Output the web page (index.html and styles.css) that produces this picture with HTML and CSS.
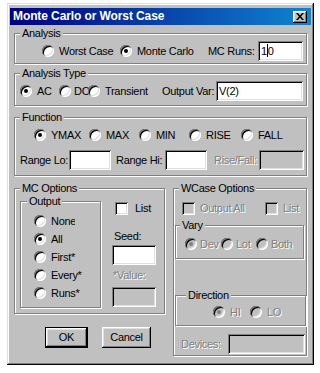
FILE: index.html
```html
<!DOCTYPE html>
<html lang="en">

<head>
  <meta charset="UTF-8" />
  <title>Monte Carlo or Worst Case</title>
  <link rel="stylesheet" href="styles.css">
</head>

<body>
  <div class="window">
    <div class="titlebar">
      <span class="title">Monte Carlo or Worst Case</span>
      <span class="close">
        <svg width="8" height="7" viewBox="0 0 8 7">
          <path d="M0 0h2l2 2.5L6 0h2L5 3.5 8 7H6L4 4.5 2 7H0l3-3.5z" fill="#000" />
        </svg>
      </span>
    </div>

    <div class="dialog">
      <fieldset class="group analysis">
        <legend>Analysis</legend>
        <div class="row">
          <label class="opt w-worst"><span class="radio"></span>Worst Case</label>
          <label class="opt w-monte"><span class="radio on"></span>Monte Carlo</label>
          <span class="lbl w-runs">MC Runs:</span>
          <span class="field w-runsbox">1<span class="caret"></span>0</span>
        </div>
      </fieldset>

      <fieldset class="group atype">
        <legend>Analysis Type</legend>
        <div class="row">
          <label class="opt w-ac"><span class="radio on"></span>AC</label>
          <label class="opt w-dc"><span class="radio"></span>DC</label>
          <label class="opt w-tran"><span class="radio"></span>Transient</label>
          <span class="lbl w-outvar">Output Var:</span>
          <span class="field w-outbox">V(2)</span>
        </div>
      </fieldset>

      <fieldset class="group function">
        <legend>Function</legend>
        <div class="row funcs">
          <label class="opt w-ymax"><span class="radio on"></span>YMAX</label>
          <label class="opt w-max"><span class="radio"></span>MAX</label>
          <label class="opt w-min"><span class="radio"></span>MIN</label>
          <label class="opt w-rise"><span class="radio"></span>RISE</label>
          <label class="opt"><span class="radio"></span>FALL</label>
        </div>
        <div class="row ranges">
          <span class="lbl w-range">Range Lo:</span>
          <span class="field w-rangebox"></span>
          <span class="lbl w-range gap-hi">Range Hi:</span>
          <span class="field w-rangebox"></span>
          <span class="lbl off w-rf">Rise/Fall:</span>
          <span class="field off w-rfbox"></span>
        </div>
      </fieldset>

      <div class="lower">
        <div class="leftcol">
          <fieldset class="group mc">
            <legend>MC Options</legend>
            <div class="mc-inner">
              <fieldset class="group output">
                <legend>Output</legend>
                <div class="outlist">
                  <label class="opt"><span class="radio"></span><span class="clip">None</span></label>
                  <label class="opt"><span class="radio on"></span>All</label>
                  <label class="opt"><span class="radio"></span>First*</label>
                  <label class="opt"><span class="radio"></span>Every*</label>
                  <label class="opt"><span class="radio"></span>Runs*</label>
                </div>
              </fieldset>
              <div class="mcside">
                <label class="chk"><span class="check"></span>List</label>
                <span class="seed-lbl">Seed:</span>
                <span class="field seed-box"></span>
                <span class="val-lbl off">*Value:</span>
                <span class="field off val-box"></span>
              </div>
            </div>
          </fieldset>
          <div class="buttons">
            <span class="btn default">OK</span>
            <span class="btn cancel">Cancel</span>
          </div>
        </div>

        <fieldset class="group wcase">
          <legend>WCase Options</legend>
          <div class="wchecks">
            <label class="chk w-outall off"><span class="check off"></span>Output All</label>
            <label class="chk off"><span class="check off"></span>List</label>
          </div>
          <fieldset class="group vary">
            <legend>Vary</legend>
            <div class="row">
              <label class="opt off w-dev"><span class="radio off on"></span>Dev</label>
              <label class="opt off w-lot"><span class="radio off"></span>Lot</label>
              <label class="opt off"><span class="radio off"></span>Both</label>
            </div>
          </fieldset>
          <fieldset class="group direction">
            <legend>Direction</legend>
            <div class="row">
              <label class="opt off w-hi"><span class="radio off on"></span>HI</label>
              <label class="opt off"><span class="radio off"></span>LO</label>
            </div>
          </fieldset>
          <div class="row devices">
            <span class="lbl off w-dev-lbl">Devices:</span>
            <span class="field off w-devbox"></span>
          </div>
        </fieldset>
      </div>
    </div>
  </div>
</body>

</html>
```

FILE: styles.css
```css
* {
  box-sizing: border-box;
}

body {
  margin: 0;
  background: #fff;
  font-family: "Liberation Sans", Arial, sans-serif;
  font-size: 11px;
  line-height: 13px;
  letter-spacing: -0.3px;
  color: #000;
}

/* window frame */
.window {
  width: 307px;
  height: 362px;
  margin: 3px 0 0 7px;
  padding: 5px 3px 3px;
  background: #c0c0c0;
  box-shadow: inset -1px -1px #000, inset 1px 1px #dfdfdf,
    inset -2px -2px #808080, inset 2px 2px #fff;
}

.titlebar {
  height: 17px;
  display: flex;
  align-items: center;
  justify-content: space-between;
  padding: 0 4px 0 3px;
  background: linear-gradient(to right, #000080, #1084d0);
}

.title {
  color: #fff;
  font-weight: bold;
  font-size: 12px;
  letter-spacing: -0.1px;
}

.close {
  width: 14px;
  height: 12px;
  display: flex;
  align-items: center;
  justify-content: center;
  background: #c0c0c0;
  box-shadow: inset -1px -1px #000, inset 1px 1px #fff,
    inset -2px -2px #808080, inset 2px 2px #dfdfdf;
}

.dialog {
  padding: 2px 4px 0;
}

/* group boxes */
.group {
  margin: 0;
  padding: 0;
  min-width: 0;
  border: 1px solid #808080;
  box-shadow: inset 1px 1px #fff, 1px 1px #fff;
}

.group legend {
  padding: 0 2px;
  margin-left: 5px;
  line-height: 13px;
  background: #c0c0c0;
}

.row {
  display: flex;
  align-items: center;
  height: 20px;
}

.opt,
.chk {
  display: flex;
  align-items: center;
  white-space: nowrap;
}

.lbl {
  white-space: nowrap;
}

.off {
  color: #808080;
  text-shadow: 1px 1px #fff;
}

/* controls */
.radio {
  position: relative;
  flex: none;
  width: 12px;
  height: 12px;
  margin-right: 5px;
  border-radius: 50%;
  background: #fff;
  box-shadow: inset 1px 1px #808080, inset -1px -1px #fff,
    inset 2px 2px #000, inset -2px -2px #dfdfdf;
}

.radio.on::after {
  content: "";
  position: absolute;
  left: 4px;
  top: 4px;
  width: 4px;
  height: 4px;
  border-radius: 50%;
  background: #000;
}

.radio.off {
  background: #c0c0c0;
}

.radio.off.on::after {
  background: #808080;
}

.check {
  flex: none;
  width: 13px;
  height: 13px;
  background: #fff;
  box-shadow: inset 1px 1px #808080, inset -1px -1px #fff,
    inset 2px 2px #000, inset -2px -2px #dfdfdf;
}

.check.off {
  background: #c0c0c0;
}

.field {
  display: block;
  flex: none;
  height: 20px;
  padding: 0 3px;
  line-height: 20px;
  background: #fff;
  text-shadow: none;
  box-shadow: inset 1px 1px #808080, inset -1px -1px #fff,
    inset 2px 2px #000, inset -2px -2px #dfdfdf;
}

.field.off {
  background: #c0c0c0;
}

.caret {
  display: inline-block;
  width: 1px;
  height: 13px;
  vertical-align: -2px;
  background: #000;
}

.btn {
  display: flex;
  align-items: center;
  justify-content: center;
  height: 21px;
  background: #c0c0c0;
  box-shadow: inset -1px -1px #000, inset 1px 1px #fff,
    inset -2px -2px #808080, inset 2px 2px #dfdfdf;
}

.btn.default {
  border: 1px solid #000;
}

/* Analysis */
.analysis {
  height: 37px;
}

.analysis .row {
  margin-top: 1px;
  padding-left: 27px;
}

.w-worst { width: 78px; }
.w-monte { width: 88px; }
.w-runs { width: 50px; }
.w-runsbox { width: 45px; }

/* Analysis Type */
.atype {
  height: 39px;
  margin-top: 3px;
}

.atype .row {
  margin-top: 1px;
  padding-left: 5px;
}

.w-ac { width: 39px; }
.w-dc { width: 29px; }
.w-dc .radio { margin-right: 3px; }
.w-tran { width: 74px; }
.w-outvar { width: 54px; }
.w-outbox { width: 87px; }

/* Function */
.function {
  height: 65px;
  margin-top: 5px;
}

.funcs {
  margin-top: 1px;
  padding-left: 19px;
}

.w-ymax { width: 55px; }
.w-max { width: 50px; }
.w-min { width: 50px; }
.w-rise { width: 52px; }

.ranges {
  margin-top: 5px;
  padding-left: 5px;
}

.w-range { width: 49px; }
.w-rangebox { width: 42px; }
.gap-hi { margin-left: 5px; }
.w-rf { width: 45px; margin-left: 7px; }
.w-rfbox { width: 45px; }

/* lower part */
.lower {
  display: flex;
  gap: 8px;
  margin-top: 6px;
}

.mc {
  width: 151px;
  height: 132px;
}

.mc-inner {
  display: flex;
  padding-left: 5px;
}

.output {
  width: 81px;
  height: 113px;
}

.output legend {
  margin-left: 6px;
}

.outlist {
  padding: 4px 0 0 13px;
}

.outlist .opt {
  height: 18px;
}

.clip {
  width: 24px;
  overflow: hidden;
}

.mcside {
  display: flex;
  flex-direction: column;
  width: 44px;
  margin-left: 11px;
}

.mcside .chk {
  margin-top: 7px;
  padding-left: 3px;
}

.mcside .chk .check {
  margin-right: 7px;
}

.seed-lbl {
  margin-top: 15px;
  padding-left: 2px;
}

.seed-box {
  margin-top: 2px;
}

.val-lbl {
  margin-top: 4px;
  padding-left: 1px;
}

.val-box {
  margin-top: 5px;
}

.buttons {
  display: flex;
  margin-top: 13px;
  padding-left: 31px;
}

.default { width: 43px; }

.cancel {
  width: 49px;
  margin-left: 14px;
}

/* WCase Options */
.wcase {
  width: 134px;
  height: 174px;
}

.wchecks {
  display: flex;
  margin-top: 7px;
  padding-left: 8px;
}

.wchecks .check {
  margin-right: 5px;
}

.w-outall { width: 83px; }

.vary {
  width: 129px;
  height: 40px;
  margin: 4px 0 0 1px;
}

.vary legend {
  margin-left: 4px;
}

.vary .row {
  margin-top: 2px;
  padding-left: 9px;
}

.vary .radio {
  margin-right: 3px;
}

.w-dev { width: 36px; }
.w-lot { width: 35px; }

.direction {
  width: 131px;
  height: 37px;
  margin: 30px 0 0 1px;
}

.direction legend {
  margin-left: 10px;
}

.direction .row {
  padding-left: 37px;
}

.w-hi { width: 37px; }

.devices {
  margin-top: 8px;
  padding-left: 7px;
}

.w-dev-lbl { width: 47px; }
.w-devbox { width: 77px; }
```
